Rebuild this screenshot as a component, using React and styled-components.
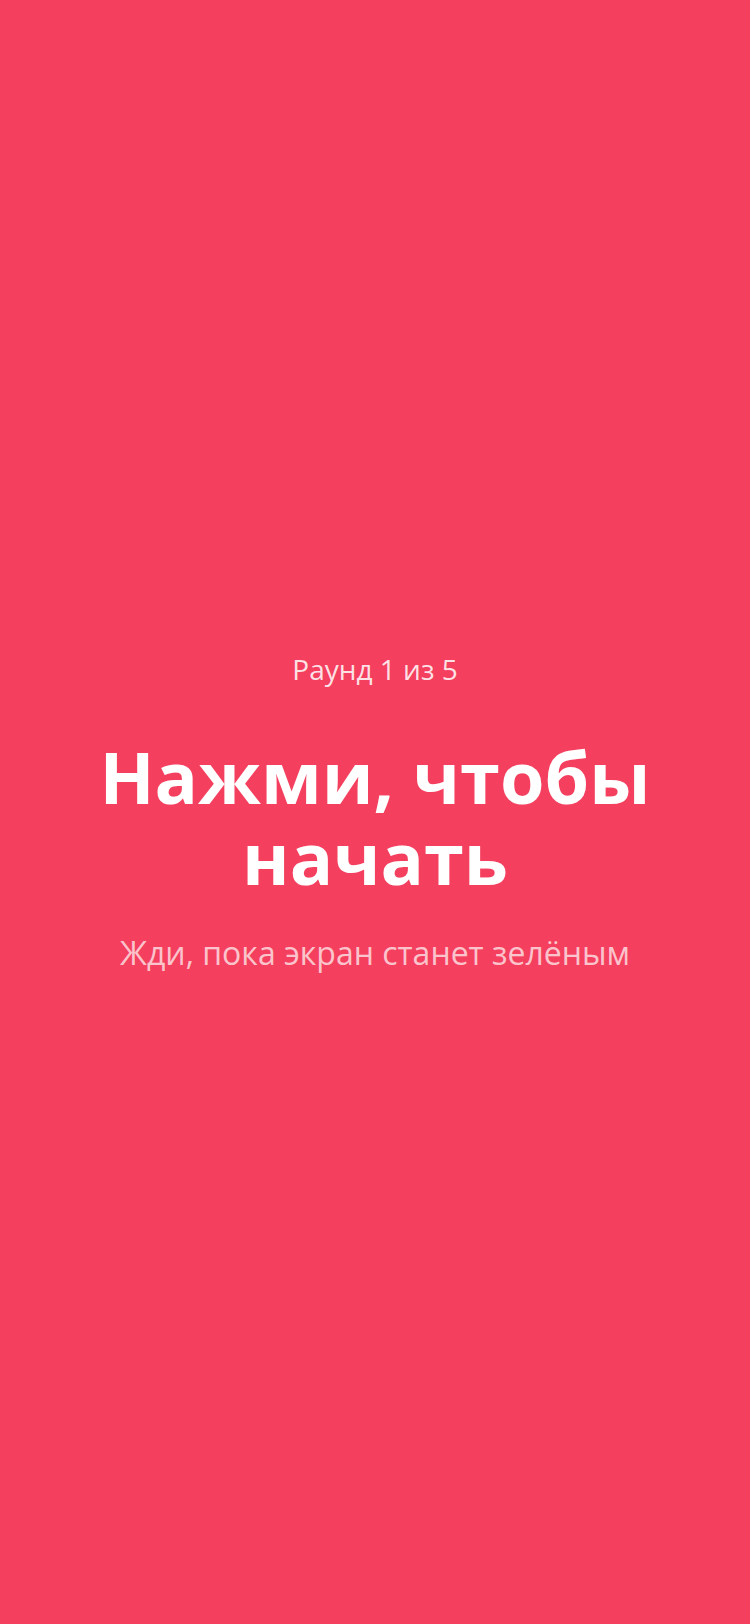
import React from "react";
import styled, { createGlobalStyle } from "styled-components";

const GlobalStyle = createGlobalStyle`
  html, body {
    margin: 0;
    padding: 0;
    height: 100%;
  }
  body {
    font-family: "Open Sans", "Noto Sans", sans-serif;
    background: #f43f5e;
  }
  #root {
    height: 100%;
  }
`;

const Screen = styled.main`
  min-height: 100vh;
  background: #f43f5e;
  display: flex;
  flex-direction: column;
  align-items: center;
  justify-content: center;
  text-align: center;
  padding: 0 24px;
  box-sizing: border-box;
  color: #fff;
  user-select: none;
  cursor: pointer;
`;

const Round = styled.div`
  font-size: 28px;
  line-height: 36px;
  color: rgba(255, 255, 255, 0.85);
  margin-bottom: 49px;
`;

const Title = styled.h1`
  margin: 0;
  font-size: 72px;
  line-height: 81px;
  font-weight: 700;
  max-width: 600px;
`;

const Hint = styled.p`
  margin: 35px 0 0;
  font-size: 32px;
  line-height: 40px;
  color: rgba(255, 255, 255, 0.7);
`;

const App = () => {
    const [round] = React.useState(1);
    const total = 5;

    return (
        <>
            <GlobalStyle />
            <Screen>
                <Round>Раунд {round} из {total}</Round>
                <Title>Нажми, чтобы начать</Title>
                <Hint>Жди, пока экран станет зелёным</Hint>
            </Screen>
        </>
    );
};

export default App;
